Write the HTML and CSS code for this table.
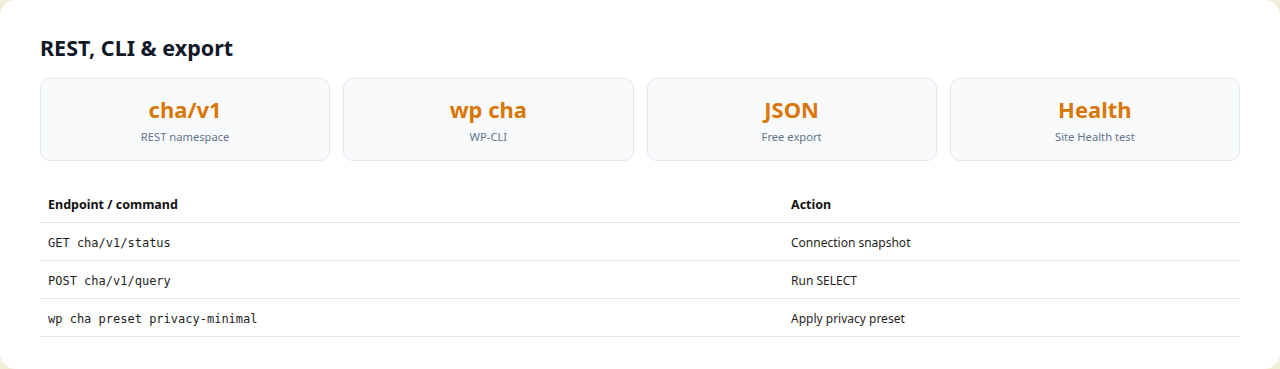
FILE: index.html
```html
<!DOCTYPE html>
<html lang="en">
<head>
  <meta charset="UTF-8" />
  <meta name="viewport" content="width=device-width, initial-scale=1.0" />
  <title>REST, CLI &amp; export</title>
  <link rel="stylesheet" href="styles.css">
</head>
<body>

  <!-- Panel -->
  <section class="panel">
    <h2>REST, CLI &amp; export</h2>

    <!-- Stat cards -->
    <div class="stats">
      <div class="stat">
        <div class="stat-value">cha/v1</div>
        <div class="stat-label">REST namespace</div>
      </div>
      <div class="stat">
        <div class="stat-value">wp cha</div>
        <div class="stat-label">WP-CLI</div>
      </div>
      <div class="stat">
        <div class="stat-value">JSON</div>
        <div class="stat-label">Free export</div>
      </div>
      <div class="stat">
        <div class="stat-value">Health</div>
        <div class="stat-label">Site Health test</div>
      </div>
    </div>

    <!-- Endpoints -->
    <table class="endpoints">
      <thead>
        <tr>
          <th class="col-cmd">Endpoint / command</th>
          <th>Action</th>
        </tr>
      </thead>
      <tbody>
        <tr>
          <td><code>GET cha/v1/status</code></td>
          <td>Connection snapshot</td>
        </tr>
        <tr>
          <td><code>POST cha/v1/query</code></td>
          <td>Run SELECT</td>
        </tr>
        <tr>
          <td><code>wp cha preset privacy-minimal</code></td>
          <td>Apply privacy preset</td>
        </tr>
      </tbody>
    </table>
  </section>

</body>
</html>
```

FILE: styles.css
```css
/* General Styles */
body {
  margin: 0;
  padding: 0;
  font-family: "Noto Sans", "Open Sans", sans-serif;
  background: #f2efd9;
  color: #1e1e1e;
}

/* Panel */
.panel {
  background: #fff;
  border-radius: 16px;
  padding: 34px 40px 32px;
}

h2 {
  font-size: 21.5px;
  line-height: 28px;
  margin: 0 0 16px;
  color: #111827;
  font-weight: 700;
}

/* Stat cards */
.stats {
  display: grid;
  grid-template-columns: repeat(4, 1fr);
  gap: 13px;
}

.stat {
  background: #f8fafc;
  border: 1px solid #e2e8f0;
  border-radius: 10px;
  padding: 15px 12px 14px;
  text-align: center;
}

.stat-value {
  font-size: 22px;
  line-height: 30px;
  font-weight: 700;
  color: #d97706;
}

.stat-label {
  margin-top: 4px;
  font-size: 11.2px;
  line-height: 18px;
  color: #64748b;
}

/* Table */
.endpoints {
  width: 100%;
  margin-top: 24px;
  border-collapse: collapse;
  table-layout: fixed;
  font-size: 12px;
}

.endpoints th,
.endpoints td {
  text-align: left;
  padding: 11px 8px 9px;
  height: 17px;
  line-height: 17px;
  border-bottom: 1px solid #e5e5e5;
}

.endpoints th {
  font-size: 12.5px;
  font-weight: 700;
  color: #111;
}

.col-cmd {
  width: 727px;
}

code {
  font-family: "DejaVu Sans Mono", monospace;
  font-size: 12px;
  line-height: 1;
  color: #1e1e1e;
}
```
